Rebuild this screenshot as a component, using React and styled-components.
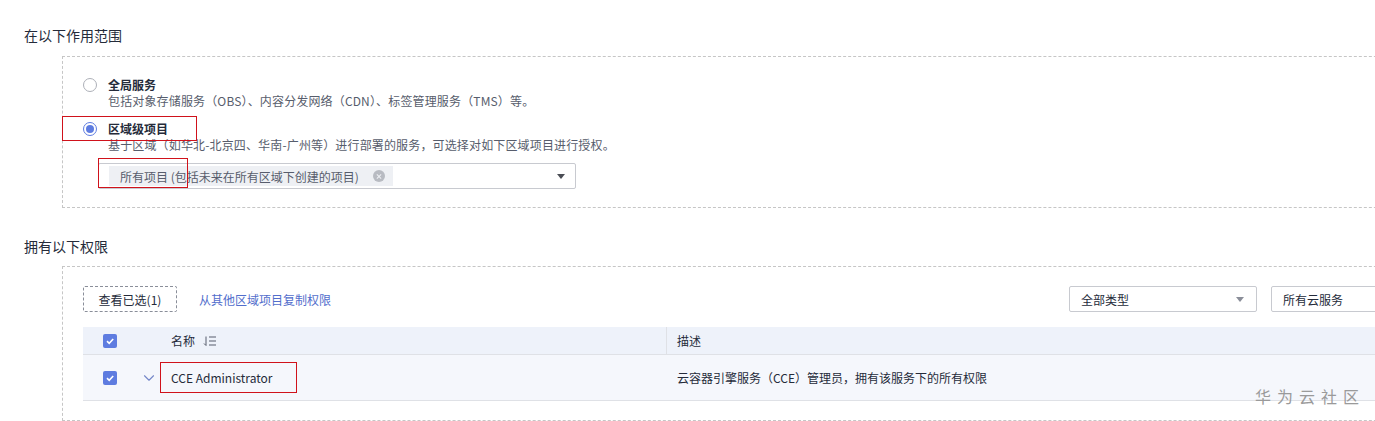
import styled, { createGlobalStyle } from "styled-components";
import { ChevronDown } from "lucide-react";

const GlobalStyle = createGlobalStyle`
  html, body {
    margin: 0;
    padding: 0;
    background: #fff;
    overflow: hidden;
  }
  body {
    font-family: "Noto Sans CJK SC", "Noto Sans", sans-serif;
    font-size: 12px;
    color: #252b3a;
  }
`;

const Page = styled.div`
  position: relative;
  width: 1375px;
  height: 421px;
  padding: 25px 0 0 24px;
  box-sizing: border-box;
`;

const SectionTitle = styled.div`
  font-size: 14px;
  line-height: 20px;
  color: #252b3a;
  margin-bottom: ${(p) => p.$gap}px;
`;

const DashedBox = styled.div`
  margin-left: 38px;
  width: 1400px;
  border: 1px dashed #c6c6c6;
  padding: ${(p) => p.$top}px 20px ${(p) => p.$bottom}px 20px;
  box-sizing: border-box;
  margin-bottom: ${(p) => p.$gap || 0}px;
`;

const Option = styled.div`
  display: flex;
  align-items: flex-start;
  gap: 11px;
  margin-bottom: ${(p) => p.$gap || 0}px;
`;

const Radio = styled.span`
  width: 14px;
  height: 14px;
  box-sizing: border-box;
  border-radius: 50%;
  border: 1px solid ${(p) => (p.$checked ? "#5e7ce0" : "#adb0b8")};
  margin-top: 1px;
  display: flex;
  align-items: center;
  justify-content: center;
  flex-shrink: 0;
  &::after {
    content: "";
    width: 8px;
    height: 8px;
    border-radius: 50%;
    background: ${(p) => (p.$checked ? "#5e7ce0" : "transparent")};
  }
`;

const OptionText = styled.div`
  display: flex;
  flex-direction: column;
`;

const OptionLabel = styled.span`
  font-weight: 700;
  line-height: 16px;
  color: #252b3a;
`;

const OptionDesc = styled.span`
  line-height: 16px;
  color: #575d6c;
  letter-spacing: 0.15px;
`;

const Select = styled.div`
  margin-left: 15px;
  margin-top: 10px;
  width: ${(p) => p.$width}px;
  height: 26px;
  box-sizing: border-box;
  border: 1px solid #c8cad0;
  border-radius: 2px;
  display: flex;
  align-items: center;
  padding: 0 10px 0 10px;
  color: #252b3a;
  flex-shrink: 0;
  white-space: nowrap;
`;

const Tag = styled.span`
  display: flex;
  align-items: center;
  height: 20px;
  background: #eef0f4;
  padding: 0 8px 0 11px;
  gap: 14px;
  color: #575d6c;
`;

const TagClose = styled.span`
  width: 12px;
  height: 12px;
  border-radius: 50%;
  background: #b8bbc2;
  position: relative;
  &::before,
  &::after {
    content: "";
    position: absolute;
    left: 3px;
    top: 5.5px;
    width: 6px;
    height: 1px;
    background: #eef0f4;
    transform: rotate(45deg);
  }
  &::after {
    transform: rotate(-45deg);
  }
`;

const Caret = styled.span`
  margin-left: auto;
  width: 0;
  height: 0;
  border-left: 4px solid transparent;
  border-right: 4px solid transparent;
  border-top: 5px solid ${(p) => p.$color || "#4a4d55"};
`;

const Toolbar = styled.div`
  display: flex;
  align-items: center;
  height: 26px;
  white-space: nowrap;
`;

const DashedButton = styled.button`
  height: 26px;
  width: 94px;
  flex-shrink: 0;
  box-sizing: border-box;
  border: 1px dashed #8a8e99;
  border-radius: 2px;
  background: #fff;
  font-family: inherit;
  font-size: 12px;
  color: #252b3a;
  padding: 0;
`;

const Link = styled.span`
  margin-left: 22px;
  color: #526ecc;
  flex-shrink: 0;
`;

const FilterGroup = styled.div`
  display: flex;
  gap: 14px;
  margin-left: auto;
  margin-right: -18px;
  flex-shrink: 0;
`;

const FilterSelect = styled(Select)`
  margin: 0;
  padding: 0 12px 0 11px;
`;

const Table = styled.div`
  margin-top: 15px;
`;

const Row = styled.div`
  display: grid;
  grid-template-columns: 52px 36px 495px 1fr;
  align-items: center;
  height: ${(p) => p.$height}px;
  background: ${(p) => p.$bg};
  border-bottom: 1px solid #dfe1e6;
`;

const Cell = styled.div`
  display: flex;
  align-items: center;
  height: 100%;
  padding-left: ${(p) => p.$pad || 0}px;
  gap: 8px;
  box-sizing: border-box;
  border-left: ${(p) => (p.$divider ? "1px solid #dfe1e6" : "none")};
  color: #252b3a;
  white-space: nowrap;
`;

const Checkbox = styled.span`
  width: 14px;
  height: 14px;
  border-radius: 2px;
  background: #5e7ce0;
  display: flex;
  align-items: center;
  justify-content: center;
`;

const NameText = styled.span`
  font-size: 12px;
`;

const Highlight = styled.div`
  position: absolute;
  border: 1px solid #d0121b;
  pointer-events: none;
`;

const Watermark = styled.div`
  position: absolute;
  left: 1255px;
  top: 384px;
  font-size: 16px;
  letter-spacing: 6px;
  color: #9a9a9a;
`;

function Check() {
  return (
    <svg width="10" height="10" viewBox="0 0 10 10">
      <path d="M2 5.2 L4.2 7.3 L8.2 3" fill="none" stroke="#fff" strokeWidth="1.6" />
    </svg>
  );
}

function SortIcon() {
  return (
    <svg width="14" height="12" viewBox="0 0 14 12">
      <path d="M3 1.5 V10.5 M1 8.5 L3 10.5" fill="none" stroke="#575d6c" strokeWidth="1" />
      <path d="M6 2 H13 M6 6 H13 M6 10 H13" fill="none" stroke="#575d6c" strokeWidth="1" />
    </svg>
  );
}

export default function App() {
  return (
    <>
      <GlobalStyle />
      <Page>
        <SectionTitle $gap={11}>在以下作用范围</SectionTitle>
        <DashedBox $top={20} $bottom={18} $gap={28}>
          <Option $gap={12}>
            <Radio />
            <OptionText>
              <OptionLabel>全局服务</OptionLabel>
              <OptionDesc>包括对象存储服务（OBS）、内容分发网络（CDN）、标签管理服务（TMS）等。</OptionDesc>
            </OptionText>
          </Option>
          <Option>
            <Radio $checked />
            <OptionText>
              <OptionLabel>区域级项目</OptionLabel>
              <OptionDesc>基于区域（如华北-北京四、华南-广州等）进行部署的服务，可选择对如下区域项目进行授权。</OptionDesc>
            </OptionText>
          </Option>
          <Select $width={478}>
            <Tag>
              所有项目 (包括未来在所有区域下创建的项目)
              <TagClose />
            </Tag>
            <Caret />
          </Select>
        </DashedBox>

        <SectionTitle $gap={10}>拥有以下权限</SectionTitle>
        <DashedBox $top={19} $bottom={19}>
          <Toolbar>
            <DashedButton>查看已选(1)</DashedButton>
            <Link>从其他区域项目复制权限</Link>
            <FilterGroup>
              <FilterSelect $width={188}>
                全部类型
                <Caret $color="#8a8e99" />
              </FilterSelect>
              <FilterSelect $width={188}>所有云服务</FilterSelect>
            </FilterGroup>
          </Toolbar>
          <Table>
            <Row $height={27} $bg="#eef2fa">
              <Cell $pad={20}>
                <Checkbox>
                  <Check />
                </Checkbox>
              </Cell>
              <Cell />
              <Cell>
                <NameText>名称</NameText>
                <SortIcon />
              </Cell>
              <Cell $pad={10} $divider>
                描述
              </Cell>
            </Row>
            <Row $height={45} $bg="#f5f7fc">
              <Cell $pad={20}>
                <Checkbox>
                  <Check />
                </Checkbox>
              </Cell>
              <Cell $pad={5}>
                <ChevronDown size={18} color="#7487c8" strokeWidth={1.5} />
              </Cell>
              <Cell>
                <NameText>CCE Administrator</NameText>
              </Cell>
              <Cell $pad={11}>云容器引擎服务（CCE）管理员，拥有该服务下的所有权限</Cell>
            </Row>
          </Table>
        </DashedBox>

        <Highlight style={{ left: 62, top: 116, width: 133, height: 23 }} />
        <Highlight style={{ left: 98, top: 158, width: 88, height: 28 }} />
        <Highlight style={{ left: 160, top: 362, width: 135, height: 29 }} />
        <Watermark>华为云社区</Watermark>
      </Page>
    </>
  );
}
